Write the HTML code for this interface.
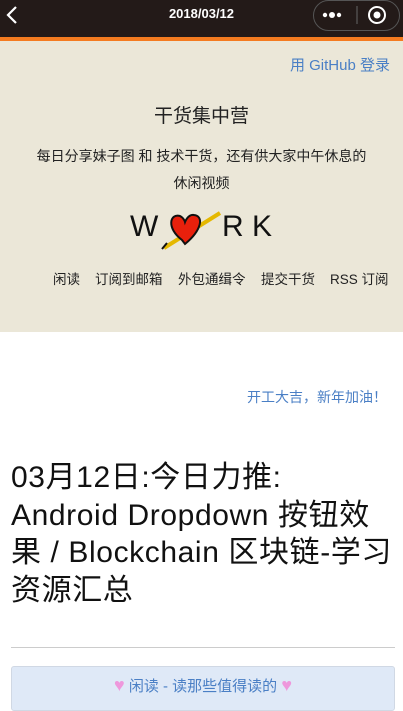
<!DOCTYPE html>
<html><head><meta charset="utf-8"><style>
*{margin:0;padding:0;box-sizing:border-box}
body{width:403px;height:703px;overflow:hidden;background:#fff;font-family:"Liberation Sans","Noto Sans CJK SC",sans-serif;position:relative}
.nav{position:absolute;top:0;left:0;width:403px;height:37px;background:#231a18}
.stripe{position:absolute;top:37px;left:0;width:403px;height:4px;background:#f47b20}
.ttl{position:absolute;top:6px;width:403px;text-align:center;color:#fff;font-size:13px;font-weight:bold}
.cap{position:absolute;left:313px;top:0;width:87px;height:31px;border:1px solid #555;border-radius:16px}
.hero{position:absolute;top:41px;left:0;width:403px;height:291px;background:#ebe7d8}
.t{position:absolute;width:403px;text-align:center;color:#222}
.nl{position:absolute;top:268px;font-size:13.5px;color:#222;white-space:nowrap}
</style></head><body>
<div class="nav"></div><div class="stripe"></div>
<svg style="position:absolute;left:5px;top:5px" width="14" height="20"><path d="M11 2 L3 10 L11 18" stroke="#fff" stroke-width="2.2" fill="none"/></svg>
<div class="ttl">2018/03/12</div>
<div class="cap"></div>
<svg style="position:absolute;left:313px;top:0" width="90" height="31">
<circle cx="12" cy="15" r="2.2" fill="#fff"/><circle cx="19" cy="15" r="3" fill="#fff"/><circle cx="26" cy="15" r="2.2" fill="#fff"/>
<line x1="44" y1="6" x2="44" y2="24" stroke="#666"/>
<circle cx="64" cy="15" r="8" stroke="#fff" stroke-width="2" fill="none"/><circle cx="64" cy="15" r="3.5" fill="#fff"/></svg>
<div class="hero"></div>
<div style="position:absolute;top:54px;right:13px;color:#4a7fc5;font-size:15px">用 GitHub 登录</div>
<div class="t" style="top:101px;font-size:19px">干货集中营</div>
<div class="t" style="top:143px;font-size:14px;line-height:27px">每日分享妹子图 和 技术干货，还有供大家中午休息的<br>休闲视频</div>
<div style="position:absolute;left:130px;top:210px;width:150px;height:40px">
<span style="position:absolute;left:0;top:0;font-size:30px;color:#111">W</span>
<svg style="position:absolute;left:28px;top:0" width="70" height="40"><path d="M6 38 L62 3" stroke="#e5b800" stroke-width="4"/><path d="M4 39 L9 33" stroke="#111" stroke-width="2"/><path d="M24 30 C8 18 12 3 22 6 C26 8 27 12 27 12 C27 12 30 4 36 5 C46 6 44 20 27 34 Z" fill="#e8200c" stroke="#111" stroke-width="2"/></svg>
<span style="position:absolute;left:92px;top:0;font-size:30px;color:#111">R</span>
<span style="position:absolute;left:122px;top:0;font-size:30px;color:#111">K</span>
</div>
<span class="nl" style="left:53px">闲读</span>
<span class="nl" style="left:95px">订阅到邮箱</span>
<span class="nl" style="left:178px">外包通缉令</span>
<span class="nl" style="left:261px">提交干货</span>
<span class="nl" style="left:330px">RSS 订阅</span>
<div style="position:absolute;top:387px;right:16px;color:#4a7fc5;font-size:14px">开工大吉，新年加油！</div>
<div style="position:absolute;top:459px;left:11px;width:400px;font-size:30px;letter-spacing:0.6px;line-height:37.5px;color:#111;white-space:nowrap">03月12日:今日力推:<br>Android Dropdown 按钮效<br>果 / Blockchain 区块链-学习<br>资源汇总</div>
<div style="position:absolute;top:647px;left:11px;width:384px;height:1px;background:#ccc"></div>
<div style="position:absolute;top:666px;left:11px;width:384px;height:45px;background:#dfe9f7;border:1px solid #d0d8e4;border-radius:3px;text-align:center;padding-top:8px;font-size:15px;color:#4a7fc5"><span style="color:#ee98dc;font-size:18px">♥</span> 闲读 - 读那些值得读的 <span style="color:#ee98dc;font-size:18px">♥</span></div>
</body></html>
